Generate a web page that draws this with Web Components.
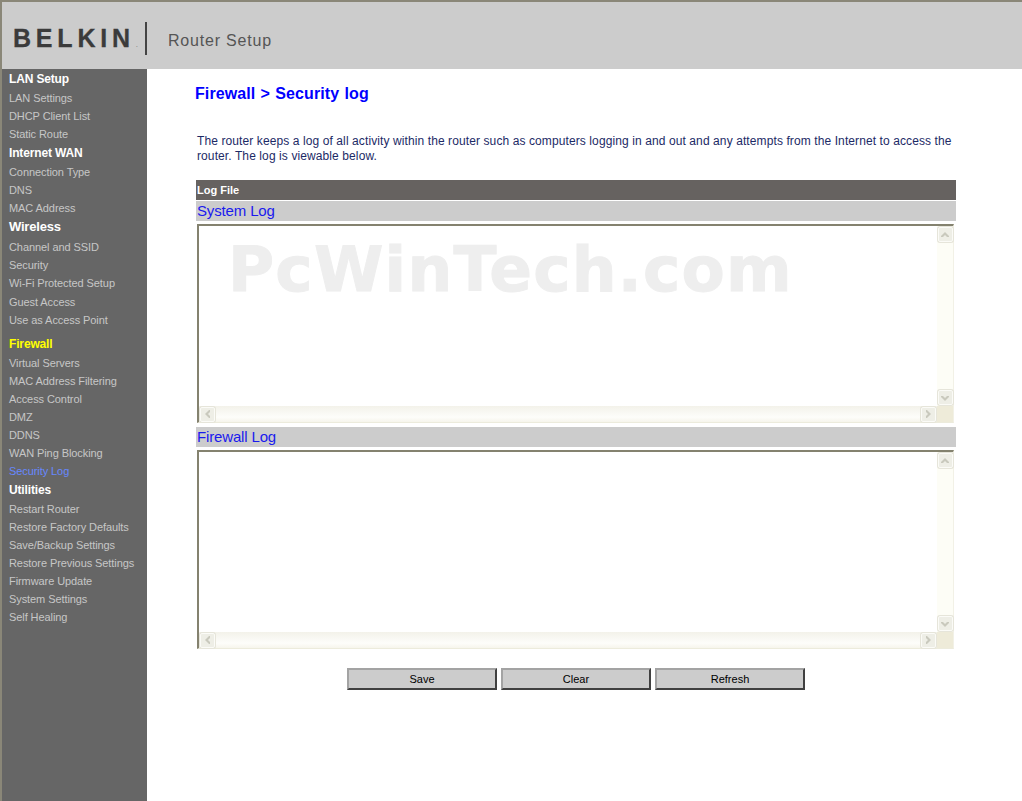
<!DOCTYPE html>
<html>
<head>
<meta charset="utf-8">
<title>Router Setup</title>
<style>
  html, body { margin: 0; padding: 0; background: #fff; }
  body { font-family: "Liberation Sans", Arial, sans-serif; height: 801px; overflow: hidden; }
</style>
</head>
<body>
<router-page>
  <router-header slot="header"></router-header>
  <side-nav slot="nav">
    <nav-head>LAN Setup</nav-head>
    <nav-link>LAN Settings</nav-link>
    <nav-link>DHCP Client List</nav-link>
    <nav-link>Static Route</nav-link>
    <nav-head>Internet WAN</nav-head>
    <nav-link>Connection Type</nav-link>
    <nav-link>DNS</nav-link>
    <nav-link>MAC Address</nav-link>
    <nav-head size="big">Wireless</nav-head>
    <nav-link style="margin-top:1px">Channel and SSID</nav-link>
    <nav-link>Security</nav-link>
    <nav-link>Wi-Fi Protected Setup</nav-link>
    <nav-link style="margin-top:1px">Guest Access</nav-link>
    <nav-link>Use as Access Point</nav-link>
    <nav-head active style="margin-top:5px">Firewall</nav-head>
    <nav-link>Virtual Servers</nav-link>
    <nav-link>MAC Address Filtering</nav-link>
    <nav-link>Access Control</nav-link>
    <nav-link>DMZ</nav-link>
    <nav-link>DDNS</nav-link>
    <nav-link>WAN Ping Blocking</nav-link>
    <nav-link active>Security Log</nav-link>
    <nav-head>Utilities</nav-head>
    <nav-link>Restart Router</nav-link>
    <nav-link>Restore Factory Defaults</nav-link>
    <nav-link>Save/Backup Settings</nav-link>
    <nav-link>Restore Previous Settings</nav-link>
    <nav-link>Firmware Update</nav-link>
    <nav-link>System Settings</nav-link>
    <nav-link>Self Healing</nav-link>
  </side-nav>
  <log-content>
    <span slot="title">Firewall &gt; Security log</span>
    <span slot="intro">The router keeps a log of all activity within the router such as computers logging in and out and any attempts from the Internet to access the router. The log is viewable below.</span>
    <log-pane label="System Log" watermark="PcWinTech.com"></log-pane>
    <log-pane label="Firewall Log"></log-pane>
    <action-button slot="actions">Save</action-button>
    <action-button slot="actions">Clear</action-button>
    <action-button slot="actions">Refresh</action-button>
  </log-content>
</router-page>

<script>
class RouterPage extends HTMLElement {
  connectedCallback() {
    if (this.shadowRoot) return;
    this.attachShadow({ mode: 'open' }).innerHTML = `
      <style>
        :host {
          display: grid;
          grid-template-columns: 145px 1fr;
          grid-template-rows: 67px 732px;
          width: 1020px;
          border-top: 2px solid #8a8778;
          border-left: 2px solid #8a8778;
          height: 799px;
          overflow: hidden;
        }
        .top { grid-column: 1 / 3; }
      </style>
      <div class="top"><slot name="header"></slot></div>
      <slot name="nav"></slot>
      <slot></slot>
    `;
  }
}

class RouterHeader extends HTMLElement {
  connectedCallback() {
    if (this.shadowRoot) return;
    this.attachShadow({ mode: 'open' }).innerHTML = `
      <style>
        :host {
          display: flex;
          align-items: center;
          height: 67px;
          background: #cccccc;
          padding: 6px 0 0 11px;
          box-sizing: border-box;
        }
        .logo {
          display: flex;
          align-items: baseline;
          gap: 1px;
          font: bold 25px "Liberation Sans", Arial, sans-serif;
          letter-spacing: 4.8px;
          color: #3b3b3b;
          width: 132px;
          white-space: nowrap;
          -webkit-text-stroke: 0.3px #3b3b3b;
        }
        .dot {
          font-size: 8px;
          font-weight: normal;
          letter-spacing: 0;
          color: #777;
          -webkit-text-stroke: 0;
        }
        .rule {
          width: 2px;
          height: 33px;
          background: #444;
          margin-right: 21px;
        }
        .name {
          font: 16px "Liberation Sans", Arial, sans-serif;
          letter-spacing: 0.8px;
          color: #555555;
          margin-top: 4px;
        }
      </style>
      <span class="logo"><span>BELKIN</span><span class="dot">.</span></span>
      <span class="rule"></span>
      <span class="name">Router Setup</span>
    `;
  }
}

class SideNav extends HTMLElement {
  connectedCallback() {
    if (this.shadowRoot) return;
    this.attachShadow({ mode: 'open' }).innerHTML = `
      <style>
        :host {
          display: flex;
          flex-direction: column;
          background: #666666;
          padding-left: 7px;
        }
      </style>
      <slot></slot>
    `;
  }
}

class NavHead extends HTMLElement {
  connectedCallback() {
    if (this.shadowRoot) return;
    this.attachShadow({ mode: 'open' }).innerHTML = `
      <style>
        :host {
          display: block;
          height: 20px;
          font: bold 12px/21px "Liberation Sans", Arial, sans-serif;
          letter-spacing: -0.15px;
          color: #ffffff;
        }
        :host([size="big"]) { font-size: 13px; line-height: 20px; letter-spacing: -0.2px; }
        :host([active]) { color: #ffff00; }
      </style>
      <slot></slot>
    `;
  }
}

class NavLink extends HTMLElement {
  connectedCallback() {
    if (this.shadowRoot) return;
    this.attachShadow({ mode: 'open' }).innerHTML = `
      <style>
        :host {
          display: block;
          height: 18px;
          font: 11px/18px "Liberation Sans", Arial, sans-serif;
          letter-spacing: -0.08px;
          color: #c6c6c6;
        }
        :host([active]) { color: #6688ff; }
      </style>
      <slot></slot>
    `;
  }
}

class LogContent extends HTMLElement {
  connectedCallback() {
    if (this.shadowRoot) return;
    this.attachShadow({ mode: 'open' }).innerHTML = `
      <style>
        :host {
          display: block;
          padding: 16px 0 0 49px;
        }
        h1 {
          margin: 0 0 0 -1px;
          font: bold 16px/18px "Liberation Sans", Arial, sans-serif;
          color: #0000ff;
          letter-spacing: 0.1px;
          word-spacing: 0.7px;
        }
        p {
          margin: 31px 0 16px 1px;
          width: 762px;
          font: 12px/15px "Liberation Sans", Arial, sans-serif;
          letter-spacing: 0.1px;
          color: #1c2a66;
        }
        .table { width: 760px; }
        .bar {
          height: 20px;
          background: #666260;
          color: #fff;
          font: bold 11px/20px "Liberation Sans", Arial, sans-serif;
          padding-left: 1px;
        }
        .actions {
          display: flex;
          gap: 4px;
          margin: 19px 0 0 151px;
        }
      </style>
      <h1><slot name="title"></slot></h1>
      <p><slot name="intro"></slot></p>
      <div class="table">
        <div class="bar">Log File</div>
        <slot></slot>
      </div>
      <div class="actions"><slot name="actions"></slot></div>
    `;
  }
}

const UP = '<path d="M1 6 L5 2 L9 6 L9 7 L7 7 L5 5 L3 7 L1 7 Z"/>';
const DOWN = '<path d="M1 3 L3 3 L5 5 L7 3 L9 3 L9 4 L5 8 L1 4 Z"/>';
const LEFT = '<path d="M6 1 L2 5 L6 9 L7 9 L7 7 L5 5 L7 3 L7 1 Z"/>';
const RIGHT = '<path d="M3 1 L7 5 L3 9 L2 9 L2 7 L4 5 L2 3 L2 1 Z"/>';
const arrow = (d) => `<span class="btn"><svg width="10" height="10" viewBox="0 0 10 10" fill="#c9c9bd">${d}</svg></span>`;

class LogPane extends HTMLElement {
  connectedCallback() {
    if (this.shadowRoot) return;
    const label = this.getAttribute('label') || '';
    const mark = this.getAttribute('watermark');
    this.attachShadow({ mode: 'open' }).innerHTML = `
      <style>
        :host { display: block; }
        .label {
          margin-top: 1px;
          height: 20px;
          background: #cccccc;
          color: #1a1aee;
          font: 15px/20px "Liberation Sans", Arial, sans-serif;
          letter-spacing: -0.15px;
          padding-left: 1px;
        }
        .box {
          position: relative;
          box-sizing: border-box;
          display: grid;
          grid-template-columns: 1fr 16px;
          grid-template-rows: 1fr 16px;
          width: 757px;
          height: 199px;
          margin: 3px 0 4px 1px;
          border-style: solid;
          border-width: 2px 1px 1px 2px;
          border-color: #84826f #f2f1e6 #ecebdc #84826f;
          background: #fff;
        }
        .vbar {
          display: flex;
          flex-direction: column;
          align-items: center;
          justify-content: space-between;
          background: #fdfdf6;
          padding: 1px 0;
          box-sizing: border-box;
        }
        .hbar {
          display: flex;
          align-items: center;
          justify-content: space-between;
          background: linear-gradient(#f3f2ea, #fdfdfa 70%, #f6f5ec);
          padding: 0 1px;
        }
        .corner { background: #eeebd9; }
        .btn {
          box-sizing: border-box;
          display: flex;
          align-items: center;
          justify-content: center;
          width: 15px;
          height: 15px;
          background: #eeeee6;
          border: 1px solid #fbfbf7;
          border-radius: 2px;
          box-shadow: 0 0 0 1px #e6e5da;
          flex: none;
        }
        .mark {
          position: absolute;
          left: 29px;
          top: 7px;
          font: bold 63px/74px "DejaVu Sans", sans-serif;
          letter-spacing: 1.2px;
          -webkit-text-stroke: 1px #eeeeee;
          color: #eeeeee;
          white-space: nowrap;
        }
      </style>
      <div class="label">${label}</div>
      <div class="box">
        <div class="text"></div>
        <div class="vbar">${arrow(UP)}${arrow(DOWN)}</div>
        <div class="hbar">${arrow(LEFT)}${arrow(RIGHT)}</div>
        <div class="corner"></div>
        ${mark ? `<div class="mark">${mark}</div>` : ''}
      </div>
    `;
  }
}

class ActionButton extends HTMLElement {
  connectedCallback() {
    if (this.shadowRoot) return;
    this.attachShadow({ mode: 'open' }).innerHTML = `
      <style>
        :host {
          display: block;
          box-sizing: border-box;
          width: 150px;
          height: 22px;
          background: #cccccc;
          border-style: solid;
          border-width: 2px;
          border-color: #a3a3a3 #404040 #404040 #a3a3a3;
          font: 11px/18px "Liberation Sans", Arial, sans-serif;
          color: #000;
          text-align: center;
        }
      </style>
      <slot></slot>
    `;
  }
}

customElements.define('router-page', RouterPage);
customElements.define('router-header', RouterHeader);
customElements.define('side-nav', SideNav);
customElements.define('nav-head', NavHead);
customElements.define('nav-link', NavLink);
customElements.define('log-content', LogContent);
customElements.define('log-pane', LogPane);
customElements.define('action-button', ActionButton);
</script>
</body>
</html>
